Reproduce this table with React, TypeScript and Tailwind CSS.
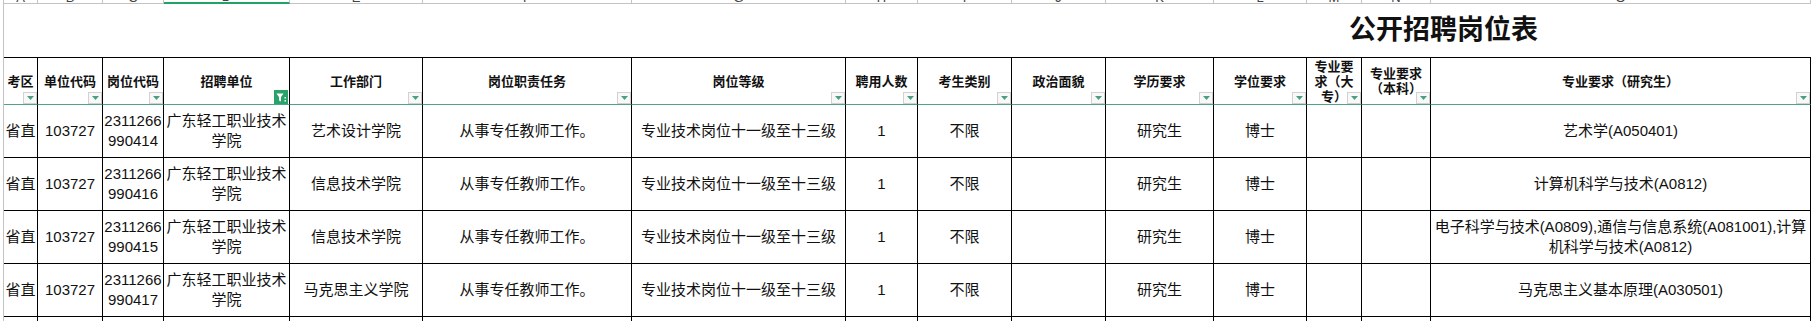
import React from "react";

const FONT = { fontFamily: '"Liberation Sans", "Noto Sans CJK SC", sans-serif' };

const cols =
  "grid grid-cols-[34px_65px_61px_126px_133px_209px_214px_72px_94px_94px_108px_93px_55px_69px_380px]";

const letters = ["A", "B", "C", "D", "E", "F", "G", "H", "I", "J", "K", "L", "M", "N", "O"];

const headers = [
  "考区",
  "单位代码",
  "岗位代码",
  "招聘单位",
  "工作部门",
  "岗位职责任务",
  "岗位等级",
  "聘用人数",
  "考生类别",
  "政治面貌",
  "学历要求",
  "学位要求",
  "专业要求（大专）",
  "专业要求（本科）",
  "专业要求（研究生）",
];

const rows: string[][] = [
  ["省直", "103727", "2311266990414", "广东轻工职业技术学院", "艺术设计学院", "从事专任教师工作。", "专业技术岗位十一级至十三级", "1", "不限", "", "研究生", "博士", "", "", "艺术学(A050401)"],
  ["省直", "103727", "2311266990416", "广东轻工职业技术学院", "信息技术学院", "从事专任教师工作。", "专业技术岗位十一级至十三级", "1", "不限", "", "研究生", "博士", "", "", "计算机科学与技术(A0812)"],
  ["省直", "103727", "2311266990415", "广东轻工职业技术学院", "信息技术学院", "从事专任教师工作。", "专业技术岗位十一级至十三级", "1", "不限", "", "研究生", "博士", "", "", "电子科学与技术(A0809),通信与信息系统(A081001),计算机科学与技术(A0812)"],
  ["省直", "103727", "2311266990417", "广东轻工职业技术学院", "马克思主义学院", "从事专任教师工作。", "专业技术岗位十一级至十三级", "1", "不限", "", "研究生", "博士", "", "", "马克思主义基本原理(A030501)"],
  ["省直", "103727", "2311266990418", "广东轻工职业技术学院", "马克思主义学院", "从事专任教师工作。", "专业技术岗位十一级至十三级", "1", "不限", "中共党员", "研究生", "博士", "", "", "马克思主义理论(A0305)"],
];

function FilterBtn() {
  return (
    <span className="absolute bottom-0 right-0 flex h-[12px] w-[14px] items-center justify-center border border-[#d2d2d2] bg-[#f8f8f8]">
      <svg width="7" height="4" viewBox="0 0 7 4">
        <path d="M0 0H7L3.5 4Z" fill="#4b9e7e" />
      </svg>
    </span>
  );
}

function ActiveFilter() {
  return (
    <span className="absolute bottom-0 right-[1px] flex h-[14px] w-[14px] items-center justify-center bg-[#2aa36a]">
      <svg width="14" height="14" viewBox="0 0 14 14">
        <path d="M2.5 3.5H9.5L7 7V11.5L5 10.5V7Z" fill="#ffffff" />
        <rect x="10.5" y="7" width="1.5" height="1.5" fill="#ffffff" />
        <rect x="10.5" y="10" width="1.5" height="1.5" fill="#ffffff" />
      </svg>
    </span>
  );
}

export default function App() {
  return (
    <div className="h-[321px] w-[1813px] overflow-hidden bg-white text-[#111]" style={FONT}>
      <div className="pl-[3px]">
        <div className="w-[1808px] border-l border-[#c4c4c4]">
          {/* spreadsheet column header strip (scrolled, only bottom visible) */}
          <div className={`${cols} h-[4px] overflow-hidden`}>
            {letters.map((l, i) => (
              <div
                key={l}
                className={`flex h-[4px] items-end justify-center overflow-hidden border-r border-[#c4c4c4] ${
                  i === 3 ? "border-b-2 border-b-[#21a366]" : "border-b border-b-[#c4c4c4]"
                }`}
              >
                <span className="mb-[-1px] text-[13px] leading-none text-[#444]">{l}</span>
              </div>
            ))}
          </div>

          {/* title row */}
          <div className="flex h-[53px] items-center pl-[1345px]">
            <span className="text-[27px] font-bold leading-none text-[#111]">公开招聘岗位表</span>
          </div>

          {/* header row */}
          <div className={cols}>
            {headers.map((h, i) => (
              <div
                key={h}
                className="relative flex h-[48px] items-center justify-center border-t border-r border-b border-t-black border-r-black border-b-[#4ea585] px-[3px] text-center text-[13px] font-bold leading-[15px] text-[#111]"
              >
                <span>{h}</span>
                {i === 3 ? <ActiveFilter /> : <FilterBtn />}
              </div>
            ))}
          </div>

          {/* data rows */}
          {rows.map((r, ri) => (
            <div key={ri} className={cols}>
              {r.map((c, ci) => (
                <div
                  key={ci}
                  className="flex h-[53px] items-center justify-center overflow-hidden border-r border-b border-black text-center text-[15px] leading-[20px] break-all"
                >
                  <span>{c}</span>
                </div>
              ))}
            </div>
          ))}
        </div>
      </div>
    </div>
  );
}
